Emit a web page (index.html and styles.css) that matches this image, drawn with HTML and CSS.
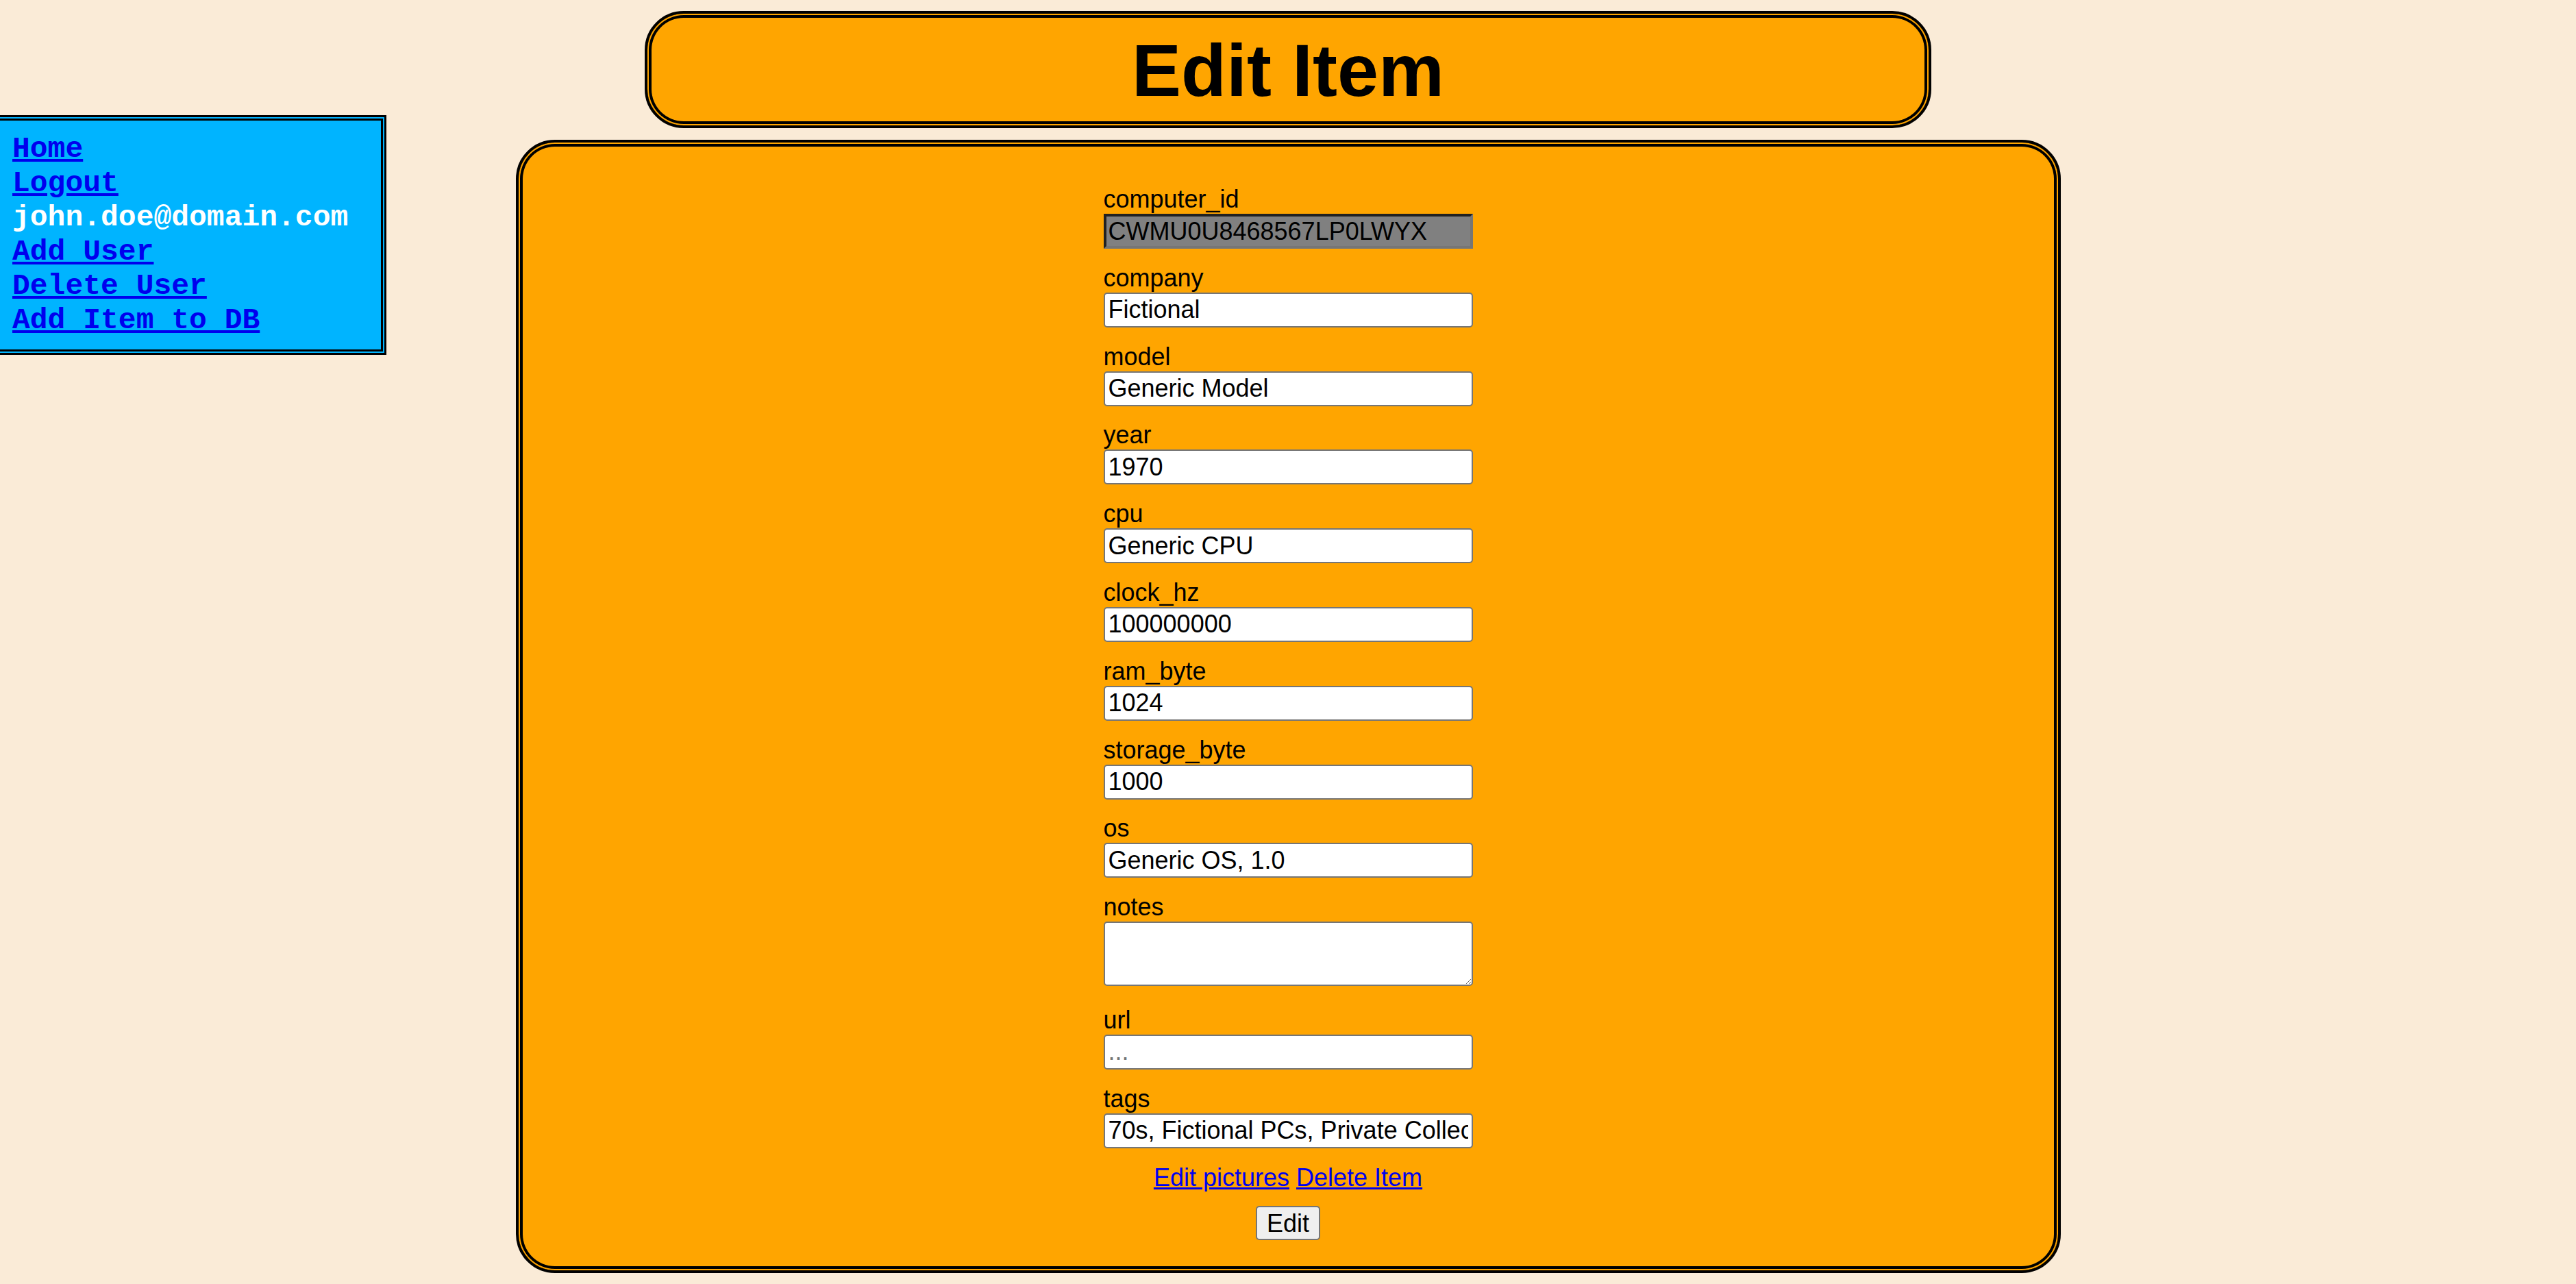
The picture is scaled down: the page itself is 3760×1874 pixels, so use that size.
FILE: index.html
```html
<!DOCTYPE html>
<html lang="en">
<head>
<meta charset="utf-8">
<title>Edit Item</title>
<link rel="stylesheet" href="styles.css">
</head>
<body>
<div class="page">
  <nav class="sidebar">
    <a href="#">Home</a>
    <a href="#">Logout</a>
    <span class="user">john.doe@domain.com</span>
    <a href="#">Add User</a>
    <a href="#">Delete User</a>
    <a href="#">Add Item to DB</a>
  </nav>

  <header class="title-box">
    <h1>Edit Item</h1>
  </header>

  <main class="panel">
    <form class="item-form">
      <label for="computer_id">computer_id</label>
      <input id="computer_id" class="field field-locked" type="text" value="CWMU0U8468567LP0LWYX" readonly>

      <label for="company">company</label>
      <input id="company" class="field" type="text" value="Fictional">

      <label for="model">model</label>
      <input id="model" class="field" type="text" value="Generic Model">

      <label for="year">year</label>
      <input id="year" class="field" type="text" value="1970">

      <label for="cpu">cpu</label>
      <input id="cpu" class="field" type="text" value="Generic CPU">

      <label for="clock_hz">clock_hz</label>
      <input id="clock_hz" class="field" type="text" value="100000000">

      <label for="ram_byte">ram_byte</label>
      <input id="ram_byte" class="field" type="text" value="1024">

      <label for="storage_byte">storage_byte</label>
      <input id="storage_byte" class="field" type="text" value="1000">

      <label for="os">os</label>
      <input id="os" class="field" type="text" value="Generic OS, 1.0">

      <label for="notes">notes</label>
      <textarea id="notes" class="field field-notes"></textarea>

      <label for="url">url</label>
      <input id="url" class="field" type="text" placeholder="...">

      <label for="tags">tags</label>
      <input id="tags" class="field" type="text" value="70s, Fictional PCs, Private Collection">

      <div class="item-links">
        <a href="#">Edit pictures</a> <a href="#">Delete Item</a>
      </div>

      <button class="submit" type="submit">Edit</button>
    </form>
  </main>
</div>
</body>
</html>
```

FILE: styles.css
```css
* {
  box-sizing: border-box;
}

html,
body {
  margin: 0;
  padding: 0;
}

body {
  background: #faebd7;
  color: #000;
  font-family: "Liberation Sans", Arial, sans-serif;
  font-size: 36px;
}

.page {
  display: grid;
  grid-template-columns: 1fr 2255px 1fr;
  grid-template-rows: auto auto;
  row-gap: 17px;
  padding-top: 16px;
}

/* Left navigation box */
.sidebar {
  grid-column: 1;
  grid-row: 1 / span 2;
  align-self: start;
  justify-self: start;
  margin-top: 152px;
  width: 564px;
  display: flex;
  flex-direction: column;
  align-items: flex-start;
  padding: 17px 0 17px 18px;
  background: #00b4ff;
  border: 8px double #000;
  border-left: 0;
  font-family: "Courier New", "Nimbus Mono PS", "Nimbus Mono L", "FreeMono", "Liberation Mono", monospace;
  font-weight: bold;
  font-size: 43px;
  line-height: 50px;
}

.sidebar a {
  color: #0000ee;
  text-decoration: underline;
}

.sidebar .user {
  color: #fff;
}

/* Orange boxes: black / orange / black ring (4px, 2px, 4px) */
.title-box,
.panel {
  background: #ffa500;
  border: 4px solid #000;
  border-radius: 57px;
  box-shadow: inset 0 0 0 2px #ffa500, inset 0 0 0 6px #000;
}

.title-box {
  grid-column: 2;
  grid-row: 1;
  justify-self: center;
  width: 1878px;
  padding: 21px 0 18px;
  text-align: center;
}

.title-box h1 {
  margin: 0;
  font-size: 108px;
  line-height: 124px;
  font-weight: bold;
}

/* Main panel */
.panel {
  grid-column: 2;
  grid-row: 2;
  padding: 61px 0 44px;
}

.item-form {
  width: 539px;
  margin: 0 auto;
  display: flex;
  flex-direction: column;
}

.item-form label {
  line-height: 43px;
}

.field {
  display: block;
  width: 100%;
  height: 51px;
  margin: 0 0 20.8px;
  padding: 0 5px;
  font-family: inherit;
  font-size: 36px;
  color: #000;
  background: #fff;
  border: 2px solid #767676;
  border-radius: 5px;
  outline: none;
}

.field::placeholder {
  color: #757575;
}

.field-locked {
  padding: 0 3px;
  background: #808080;
  border: 4px inset #767676;
  border-radius: 0;
}

.field-notes {
  height: 94px;
  margin-bottom: 27.8px;
  padding: 2px 5px;
}

.item-links {
  line-height: 43px;
  text-align: center;
  margin-bottom: 20.8px;
}

.item-links a {
  color: #0000ee;
  text-decoration: underline;
}

.submit {
  align-self: center;
  height: 50px;
  padding: 0 14px;
  font-family: inherit;
  font-size: 36px;
  line-height: 41px;
  color: #000;
  background: #efefef;
  border: 2px solid #767676;
  border-radius: 5px;
}
```
